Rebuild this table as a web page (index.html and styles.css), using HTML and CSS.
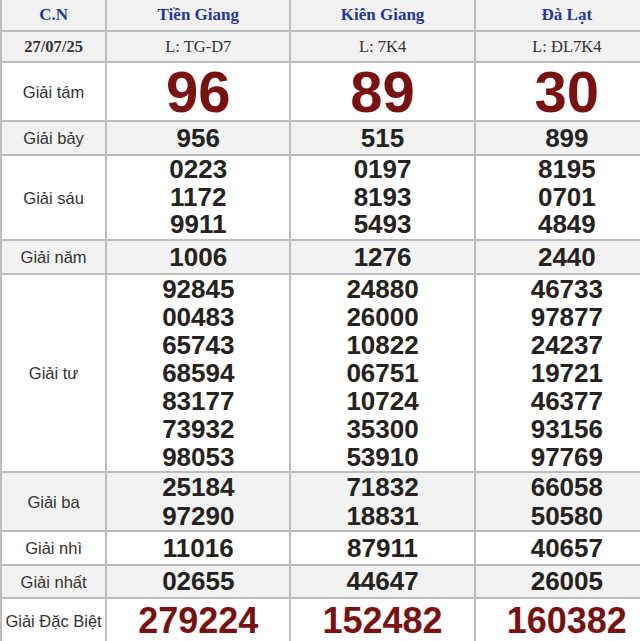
FILE: index.html
```html
<!DOCTYPE html>
<html lang="vi">
<head>
<meta charset="utf-8">
<title>Kết quả xổ số</title>
<link rel="stylesheet" href="styles.css">
</head>
<body>
<table class="kq">
  <colgroup>
    <col class="c-label">
    <col class="c-prov">
    <col class="c-prov">
    <col class="c-prov">
  </colgroup>
  <tr class="r-head">
    <td class="hd">C.N</td>
    <td class="hd">Tiền Giang</td>
    <td class="hd">Kiên Giang</td>
    <td class="hd">Đà Lạt</td>
  </tr>
  <tr class="r-date gray">
    <td class="date">27/07/25</td>
    <td class="serial">L: TG-D7</td>
    <td class="serial">L: 7K4</td>
    <td class="serial">L: ĐL7K4</td>
  </tr>
  <tr class="r-tam">
    <td class="lbl">Giải tám</td>
    <td class="big">96</td>
    <td class="big">89</td>
    <td class="big">30</td>
  </tr>
  <tr class="r-one gray">
    <td class="lbl">Giải bảy</td>
    <td class="num">956</td>
    <td class="num">515</td>
    <td class="num">899</td>
  </tr>
  <tr class="r-sau">
    <td class="lbl">Giải sáu</td>
    <td class="num"><div>0223</div><div>1172</div><div>9911</div></td>
    <td class="num"><div>0197</div><div>8193</div><div>5493</div></td>
    <td class="num"><div>8195</div><div>0701</div><div>4849</div></td>
  </tr>
  <tr class="r-one gray">
    <td class="lbl">Giải năm</td>
    <td class="num">1006</td>
    <td class="num">1276</td>
    <td class="num">2440</td>
  </tr>
  <tr class="r-tu">
    <td class="lbl">Giải tư</td>
    <td class="num"><div>92845</div><div>00483</div><div>65743</div><div>68594</div><div>83177</div><div>73932</div><div>98053</div></td>
    <td class="num"><div>24880</div><div>26000</div><div>10822</div><div>06751</div><div>10724</div><div>35300</div><div>53910</div></td>
    <td class="num"><div>46733</div><div>97877</div><div>24237</div><div>19721</div><div>46377</div><div>93156</div><div>97769</div></td>
  </tr>
  <tr class="r-ba gray">
    <td class="lbl">Giải ba</td>
    <td class="num"><div>25184</div><div>97290</div></td>
    <td class="num"><div>71832</div><div>18831</div></td>
    <td class="num"><div>66058</div><div>50580</div></td>
  </tr>
  <tr class="r-one">
    <td class="lbl">Giải nhì</td>
    <td class="num">11016</td>
    <td class="num">87911</td>
    <td class="num">40657</td>
  </tr>
  <tr class="r-nhat gray">
    <td class="lbl">Giải nhất</td>
    <td class="num">02655</td>
    <td class="num">44647</td>
    <td class="num">26005</td>
  </tr>
  <tr class="r-db">
    <td class="lbl">Giải Đặc Biệt</td>
    <td class="db">279224</td>
    <td class="db">152482</td>
    <td class="db">160382</td>
  </tr>
</table>
</body>
</html>
```

FILE: styles.css
```css
html, body {
  margin: 0;
  padding: 0;
  background: #fff;
  overflow: hidden;
}

.kq {
  border-collapse: collapse;
  table-layout: fixed;
  width: 660px;
  font-family: "Liberation Sans", Arial, sans-serif;
}

.c-label { width: 105px; }
.c-prov { width: 184px; }

.kq td {
  border: 2px solid #bdbdbd;
  padding: 0;
  text-align: center;
  vertical-align: middle;
}

.gray td { background: #f2f2f2; }

.r-head td {
  border-top: none;
  background: #f2f2f2;
  height: 30px;
}

.hd {
  font-family: "Liberation Serif", "Times New Roman", serif;
  font-weight: bold;
  font-size: 17px;
  line-height: 30px;
  color: #2236a8;
}

.date {
  font-family: "Liberation Serif", "Times New Roman", serif;
  font-weight: bold;
  font-size: 16.5px;
  line-height: 29px;
  color: #333;
}

.serial {
  font-family: "Liberation Serif", "Times New Roman", serif;
  font-size: 16.5px;
  line-height: 29px;
  color: #333;
}

.lbl {
  font-size: 16.5px;
  line-height: 20px;
  color: #333;
}

.big {
  font-weight: bold;
  font-size: 58px;
  line-height: 57px;
  color: #7a1111;
}

.num {
  font-weight: bold;
  font-size: 26px;
  color: #252220;
}

.r-one .num { line-height: 32px; }
.r-nhat .num { line-height: 31px; }
.r-sau .num { line-height: 27.67px; }
.r-tu .num { line-height: 28px; }
.r-ba .num { line-height: 28.5px; }

.db {
  font-weight: bold;
  font-size: 36px;
  line-height: 44px;
  color: #7a1111;
}
```
